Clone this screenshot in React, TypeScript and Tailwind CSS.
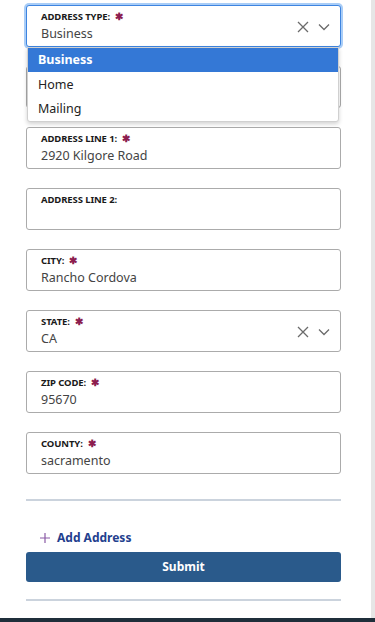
import React from "react";

const font = { fontFamily: '"Noto Sans", "Open Sans", sans-serif' };

function Star() {
  return <span className="ml-[5px] text-[#8c1d4f] text-[10px] leading-none relative top-[-1px]">✱</span>;
}

function Icons() {
  return (
    <div className="flex items-center gap-[9px] mr-[10px]">
      <svg width="12" height="12" viewBox="0 0 12 12" fill="none" stroke="#6b6b6b" strokeWidth="1.3">
        <path d="M1 1L11 11M11 1L1 11" />
      </svg>
      <svg width="12" height="8" viewBox="0 0 12 8" fill="none" stroke="#6b6b6b" strokeWidth="1.3">
        <path d="M1 1.5L6 6.5L11 1.5" />
      </svg>
    </div>
  );
}

function Field({
  label,
  value,
  required = true,
  select = false,
  focused = false,
}: {
  label: string;
  value?: string;
  required?: boolean;
  select?: boolean;
  focused?: boolean;
}) {
  return (
    <div
      className={
        "h-[42px] rounded-[3px] bg-white flex items-start " +
        (focused
          ? "border border-[#3d84e0] shadow-[0_0_0_2px_#a9cdf7]"
          : "border border-[#ababab]")
      }
    >
      <div className="flex-1 pl-[14px] pt-[4px]">
        <div className="text-[9.5px] font-bold text-[#1a1a1a] leading-[14px] h-[14px] flex items-center tracking-[-0.1px]">
          {label}
          {required && label && <Star />}
        </div>
        <div className="text-[12.5px] text-[#444] leading-[20px]">{value ?? ""}</div>
      </div>
      {select && (
        <div className="self-center mt-[1px]">
          <Icons />
        </div>
      )}
    </div>
  );
}

export default function App() {
  return (
    <div style={font} className="w-[375px] h-[622px] flex flex-col bg-white overflow-hidden">
      <div className="flex flex-1">
        <div className="w-[371px] pl-[26px] pr-[30px] pt-[5px]">
          <div className="relative flex flex-col gap-[19px]">
            <Field label="ADDRESS TYPE:" value="Business" select focused />
            <Field label="" required={false} />
            <div className="absolute left-[1px] top-[42px] w-[312px] bg-white border border-[#d0d0d0] rounded-b-[3px] shadow-[0_2px_4px_rgba(0,0,0,0.18)] z-10 text-[12.5px]">
              <div className="h-[24px] bg-[#3478d6] text-white font-bold pl-[10px] leading-[24px]">Business</div>
              <div className="h-[25px] text-[#222] pl-[10px] leading-[25px]">Home</div>
              <div className="h-[24px] text-[#222] pl-[10px] leading-[24px]">Mailing</div>
            </div>
            <Field label="ADDRESS LINE 1:" value="2920 Kilgore Road" />
            <Field label="ADDRESS LINE 2:" required={false} />
            <Field label="CITY:" value="Rancho Cordova" />
            <Field label="STATE:" value="CA" select />
            <Field label="ZIP CODE:" value="95670" />
            <Field label="COUNTY:" value="sacramento" />
          </div>
          <div className="mt-[25px] h-[2px] bg-[#cbd3dd]" />
          <div className="mt-[26px] flex items-center pl-[14px] h-[22px]">
            <svg width="10" height="10" viewBox="0 0 10 10" stroke="#8a5aa6" strokeWidth="1.2">
              <path d="M5 0V10M0 5H10" />
            </svg>
            <span className="ml-[7px] text-[12px] font-bold text-[#23408e]">Add Address</span>
          </div>
          <button className="mt-[3px] w-full h-[30px] rounded-[3px] bg-[#2a5a8b] text-white text-[12px] font-bold">
            Submit
          </button>
          <div className="mt-[17px] h-[2px] bg-[#cbd3dd]" />
        </div>
        <div className="w-[4px] bg-[#e6e6e6]" />
      </div>
      <div className="h-[4px] bg-[#1f2e3a]" />
    </div>
  );
}
